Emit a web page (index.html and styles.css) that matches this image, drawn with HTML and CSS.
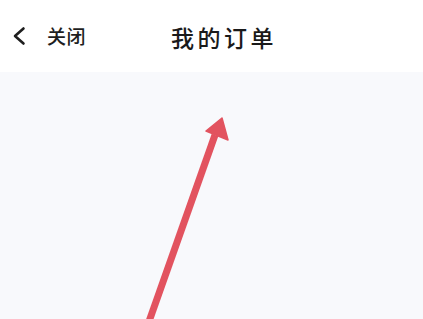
FILE: index.html
```html
<!DOCTYPE html>
<html lang="zh">
<head>
<meta charset="utf-8">
<link rel="stylesheet" href="styles.css">
</head>
<body>
<div class="page">
  <header class="topbar">
    <div class="left">
      <svg class="back" width="16" height="20" viewBox="0 0 16 20"><path d="M12.5 2.5 L4 10 L12.5 17.5" fill="none" stroke="#1e1e1e" stroke-width="2.6" stroke-linecap="round" stroke-linejoin="round"/></svg>
      <span class="close">关闭</span>
    </div>
    <h1 class="title">我的订单</h1>
  </header>
  <main class="content"></main>
  <svg class="arrow" width="423" height="319" viewBox="0 0 423 319">
    <line x1="146" y1="330" x2="215" y2="135" stroke="#e2535f" stroke-width="7" stroke-linecap="butt"/>
    <polygon points="222,118 206,131 228,140" fill="#e2535f" stroke="#e2535f" stroke-width="1.5" stroke-linejoin="round"/>
  </svg>
</div>
</body>
</html>
```
FILE: styles.css
```css
html, body {
  margin: 0;
  padding: 0;
  width: 423px;
  height: 319px;
  overflow: hidden;
  background: #f8f9fc;
  font-family: "Noto Sans CJK SC", "Noto Sans", sans-serif;
}
.page {
  position: relative;
  width: 423px;
  height: 319px;
  display: flex;
  flex-direction: column;
}
.topbar {
  position: relative;
  height: 72px;
  background: #ffffff;
  display: flex;
  align-items: center;
  flex-shrink: 0;
}
.left {
  display: flex;
  align-items: center;
  padding-left: 11px;
  margin-top: -1px;
}
.back {
  display: block;
}
.close {
  margin-left: 20px;
  font-size: 19px;
  font-weight: 500;
  letter-spacing: 0.5px;
  color: #1e1e1e;
  line-height: 1;
}
.title {
  position: absolute;
  left: 171px;
  top: 26px;
  margin: 0;
  font-size: 23px;
  font-weight: 500;
  letter-spacing: 3.5px;
  color: #1a1a1a;
  line-height: 1;
}
.content {
  flex: 1;
  background: #f8f9fc;
}
.arrow {
  position: absolute;
  left: 0;
  top: 0;
}
```
